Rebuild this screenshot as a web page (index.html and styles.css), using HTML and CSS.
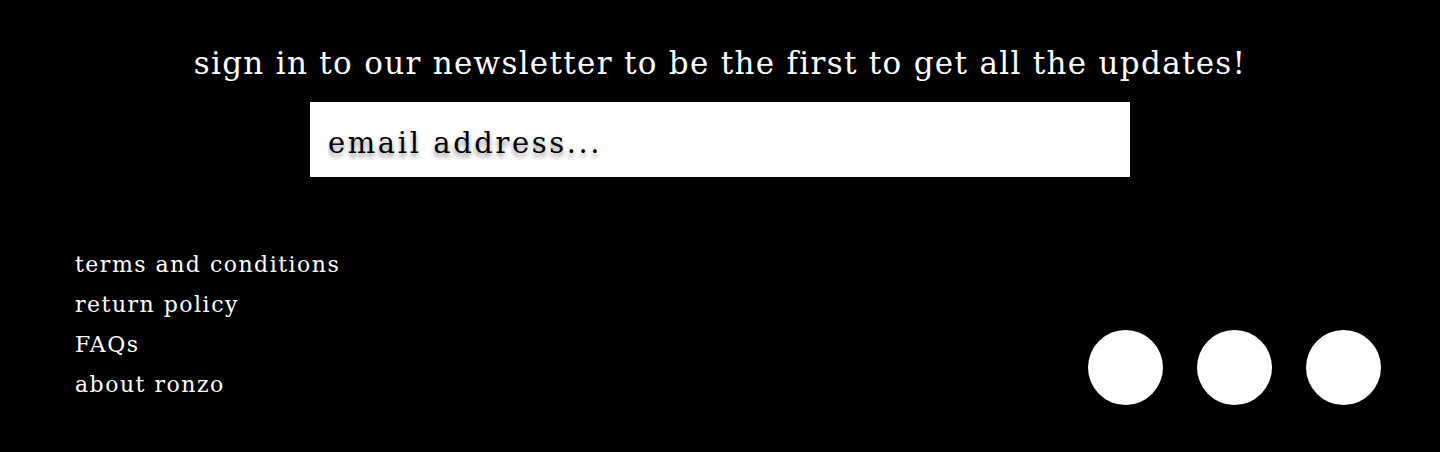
FILE: index.html
```html
<!DOCTYPE html>
<html lang="en">
<head>
<meta charset="utf-8">
<title>Newsletter footer</title>
<link rel="stylesheet" href="styles.css">
</head>
<body>
<footer class="footer">
  <section class="newsletter">
    <h2 class="newsletter-title">sign in to our newsletter to be the first to get all the updates!</h2>
    <form class="newsletter-form">
      <input class="email-input" type="email" placeholder="email address...">
    </form>
  </section>
  <div class="footer-bottom">
    <ul class="footer-links">
      <li><a href="#">terms and conditions</a></li>
      <li><a href="#">return policy</a></li>
      <li><a href="#">FAQs</a></li>
      <li><a href="#">about ronzo</a></li>
    </ul>
    <div class="socials">
      <a class="social" href="#" aria-label="social 1"></a>
      <a class="social" href="#" aria-label="social 2"></a>
      <a class="social" href="#" aria-label="social 3"></a>
    </div>
  </div>
</footer>
</body>
</html>
```
FILE: styles.css
```css
html, body {
  margin: 0;
  padding: 0;
  background: #000;
}
body {
  font-family: "DejaVu Serif", "Liberation Serif", serif;
  color: #fff;
  width: 1440px;
  height: 452px;
  overflow: hidden;
}
.footer {
  display: flex;
  flex-direction: column;
  height: 452px;
  box-sizing: border-box;
}
.newsletter {
  display: flex;
  flex-direction: column;
  align-items: center;
  padding-top: 40px;
}
.newsletter-title {
  margin: 0;
  font-weight: normal;
  font-size: 31px;
  line-height: 46px;
  letter-spacing: 1.3px;
}
.newsletter-form {
  margin: 16px 0 0;
}
.email-input {
  display: block;
  width: 820px;
  height: 75px;
  box-sizing: border-box;
  border: none;
  outline: none;
  background: #fff;
  padding: 6px 18px 0;
  font-family: "DejaVu Serif", "Liberation Serif", serif;
  font-size: 29px;
  letter-spacing: 2.6px;
  color: #000;
}
.email-input::placeholder {
  color: #000;
  opacity: 1;
  text-shadow: 0 4px 5px rgba(0, 0, 0, 0.45);
}
.footer-bottom {
  margin-top: auto;
  display: flex;
  justify-content: space-between;
  align-items: flex-end;
  padding: 0 59px 47px 75px;
}
.footer-links {
  list-style: none;
  margin: 0;
  padding: 0;
}
.footer-links li {
  font-size: 22px;
  line-height: 40px;
  letter-spacing: 1.5px;
}
.footer-links a {
  color: #fff;
  text-decoration: none;
}
.socials {
  display: flex;
  gap: 34px;
}
.social {
  display: block;
  width: 75px;
  height: 75px;
  border-radius: 50%;
  background: #fff;
}
```
